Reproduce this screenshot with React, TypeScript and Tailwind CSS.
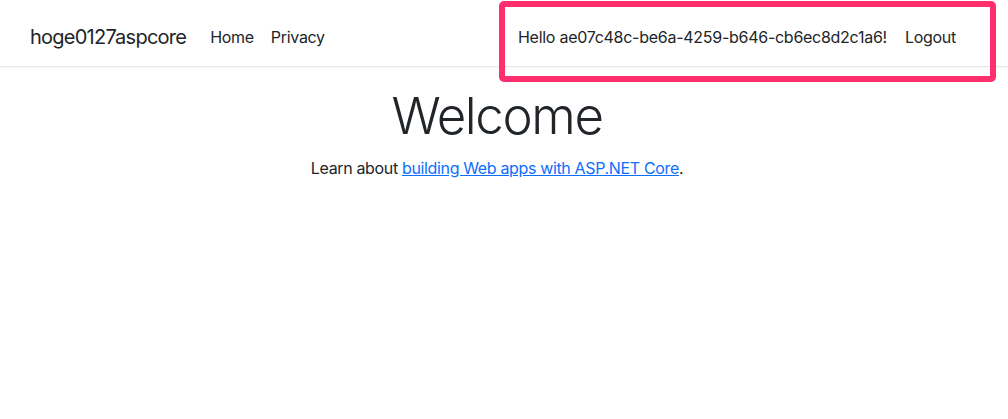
export default function App() {
  return (
    <div className="relative min-h-[419px] w-full bg-white text-[#212529] font-['Inter','Liberation_Sans',sans-serif]">
      {/* Navbar */}
      <header className="flex h-[67px] items-center border-b border-[#e5e5ea] bg-white px-[30px] pt-[8px] shadow-[0_1px_3px_rgba(0,0,0,0.04)]">
        <span className="mr-[24px] text-[20px] leading-none tracking-[-0.75px] text-[#212529]">hoge0127aspcore</span>
        <nav className="flex items-center gap-[17px] text-[16px] tracking-[-0.3px] text-[#212529]">
          <a>Home</a>
          <a>Privacy</a>
        </nav>
        <div className="ml-auto mr-[22px] flex items-center gap-[18px] text-[16px] tracking-[-0.27px] text-[#212529]">
          <span>Hello ae07c48c-be6a-4259-b646-cb6ec8d2c1a6!</span>
          <a>Logout</a>
        </div>
      </header>

      {/* Main */}
      <main className="flex flex-col items-center pr-[14px] pt-[18px] text-center">
        <h1 className="text-[51px] font-light leading-[1.2] tracking-[-1.4px] text-[#212529]">Welcome</h1>
        <p className="mt-[10px] text-[16px] tracking-[-0.35px] text-[#212529]">
          Learn about{" "}
          <a className="text-[#0d6efd] underline">building Web apps with ASP.NET Core</a>.
        </p>
      </main>

      {/* Highlight annotation */}
      <div className="absolute left-[499px] top-[1px] h-[81px] w-[497px] rounded-[5px] border-[6px] border-[#ff2e6c]" />
    </div>
  );
}
